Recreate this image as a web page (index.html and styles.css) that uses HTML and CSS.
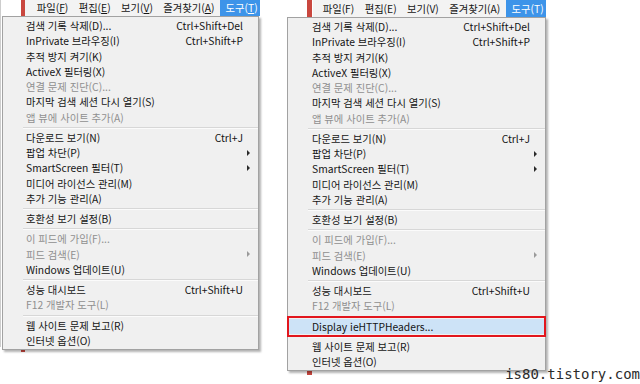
FILE: index.html
```html
<!DOCTYPE html>
<html lang="ko">
<head>
<meta charset="utf-8">
<title>IE 도구 메뉴</title>
<link rel="stylesheet" href="styles.css">
</head>
<body>
<div class="stage">
  <section class="shot shot-a">
    <div class="top">
      <div class="lead"></div>
      <nav class="bar">
        <span class="mi">파일(<u>F</u>)</span>
        <span class="mi">편집(<u>E</u>)</span>
        <span class="mi">보기(<u>V</u>)</span>
        <span class="mi">즐겨찾기(<u>A</u>)</span>
        <span class="mi on">도구(<u>T</u>)</span>
      </nav>
    </div>
    <div class="menu">
      <div class="item"><span class="label">검색 기록 삭제(D)...</span><span class="key">Ctrl+Shift+Del</span><span class="sub"></span></div>
      <div class="item"><span class="label">InPrivate 브라우징(I)</span><span class="key">Ctrl+Shift+P</span><span class="sub"></span></div>
      <div class="item"><span class="label">추적 방지 켜기(K)</span><span class="sub"></span></div>
      <div class="item"><span class="label">ActiveX 필터링(X)</span><span class="sub"></span></div>
      <div class="item dis"><span class="label">연결 문제 진단(C)...</span><span class="sub"></span></div>
      <div class="item"><span class="label">마지막 검색 세션 다시 열기(S)</span><span class="sub"></span></div>
      <div class="item dis"><span class="label">앱 뷰에 사이트 추가(A)</span><span class="sub"></span></div>
      <div class="sep"></div>
      <div class="item"><span class="label">다운로드 보기(N)</span><span class="key">Ctrl+J</span><span class="sub"></span></div>
      <div class="item"><span class="label">팝업 차단(P)</span><span class="sub arrow"></span></div>
      <div class="item"><span class="label">SmartScreen 필터(T)</span><span class="sub arrow"></span></div>
      <div class="item"><span class="label">미디어 라이선스 관리(M)</span><span class="sub"></span></div>
      <div class="item"><span class="label">추가 기능 관리(A)</span><span class="sub"></span></div>
      <div class="sep"></div>
      <div class="item"><span class="label">호환성 보기 설정(B)</span><span class="sub"></span></div>
      <div class="sep"></div>
      <div class="item dis"><span class="label">이 피드에 가입(F)...</span><span class="sub"></span></div>
      <div class="item dis"><span class="label">피드 검색(E)</span><span class="sub arrow"></span></div>
      <div class="item"><span class="label">Windows 업데이트(U)</span><span class="sub"></span></div>
      <div class="sep"></div>
      <div class="item"><span class="label">성능 대시보드</span><span class="key">Ctrl+Shift+U</span><span class="sub"></span></div>
      <div class="item dis"><span class="label">F12 개발자 도구(L)</span><span class="sub"></span></div>
      <div class="sep"></div>
      <div class="item"><span class="label">웹 사이트 문제 보고(R)</span><span class="sub"></span></div>
      <div class="item"><span class="label">인터넷 옵션(O)</span><span class="sub"></span></div>
    </div>
  </section>

  <section class="shot shot-b">
    <div class="top">
      <div class="lead"></div>
      <nav class="bar">
        <span class="mi">파일(F)</span>
        <span class="mi">편집(E)</span>
        <span class="mi">보기(V)</span>
        <span class="mi">즐겨찾기(A)</span>
        <span class="mi on">도구(T)</span>
      </nav>
    </div>
    <div class="menu">
      <div class="item"><span class="label">검색 기록 삭제(D)...</span><span class="key">Ctrl+Shift+Del</span><span class="sub"></span></div>
      <div class="item"><span class="label">InPrivate 브라우징(I)</span><span class="key">Ctrl+Shift+P</span><span class="sub"></span></div>
      <div class="item"><span class="label">추적 방지 켜기(K)</span><span class="sub"></span></div>
      <div class="item"><span class="label">ActiveX 필터링(X)</span><span class="sub"></span></div>
      <div class="item dis"><span class="label">연결 문제 진단(C)...</span><span class="sub"></span></div>
      <div class="item"><span class="label">마지막 검색 세션 다시 열기(S)</span><span class="sub"></span></div>
      <div class="item dis"><span class="label">앱 뷰에 사이트 추가(A)</span><span class="sub"></span></div>
      <div class="sep"></div>
      <div class="item"><span class="label">다운로드 보기(N)</span><span class="key">Ctrl+J</span><span class="sub"></span></div>
      <div class="item"><span class="label">팝업 차단(P)</span><span class="sub arrow"></span></div>
      <div class="item"><span class="label">SmartScreen 필터(T)</span><span class="sub arrow"></span></div>
      <div class="item"><span class="label">미디어 라이선스 관리(M)</span><span class="sub"></span></div>
      <div class="item"><span class="label">추가 기능 관리(A)</span><span class="sub"></span></div>
      <div class="sep"></div>
      <div class="item"><span class="label">호환성 보기 설정(B)</span><span class="sub"></span></div>
      <div class="sep"></div>
      <div class="item dis"><span class="label">이 피드에 가입(F)...</span><span class="sub"></span></div>
      <div class="item dis"><span class="label">피드 검색(E)</span><span class="sub arrow"></span></div>
      <div class="item"><span class="label">Windows 업데이트(U)</span><span class="sub"></span></div>
      <div class="sep"></div>
      <div class="item"><span class="label">성능 대시보드</span><span class="key">Ctrl+Shift+U</span><span class="sub"></span></div>
      <div class="item dis"><span class="label">F12 개발자 도구(L)</span><span class="sub"></span></div>
      <div class="sep"></div>
      <div class="item hl"><span class="label">Display ieHTTPHeaders...</span><span class="sub"></span></div>
      <div class="sep"></div>
      <div class="item"><span class="label">웹 사이트 문제 보고(R)</span><span class="sub"></span></div>
      <div class="item"><span class="label">인터넷 옵션(O)</span><span class="sub"></span></div>
    </div>
  </section>
</div>
<div class="mark">is80.tistory.com</div>
</body>
</html>
```

FILE: styles.css
```css
html, body {
  margin: 0;
  padding: 0;
}
body {
  width: 640px;
  height: 384px;
  overflow: hidden;
  position: relative;
  background: #ffffff;
  font-family: "Noto Sans CJK KR", "Noto Sans", sans-serif;
  font-size: 10.3px;
  color: #151515;
}

.stage {
  display: flex;
  align-items: flex-start;
}

.shot {
  flex: none;
  height: 384px;
}
.shot-a {
  width: 285px;
  background:
    linear-gradient(#c9473f, #c9473f) 21px 0 / 4px 352px no-repeat,
    linear-gradient(#cdcdcd, #cdcdcd) 0 0 / 1px 347px no-repeat;
}
.shot-b {
  width: 355px;
  background:
    linear-gradient(#c9473f, #c9473f) 22px 0 / 5px 375px no-repeat;
}

.top {
  display: flex;
  height: 16px;
}
.shot-b .top {
  height: 17px;
}
.lead {
  flex: none;
  width: 25px;
}
.shot-b .lead {
  width: 28px;
}

.bar {
  display: flex;
  flex: none;
  width: 235px;
  padding-left: 6.5px;
  box-sizing: border-box;
  background: #f3f3f3;
  overflow: hidden;
}
.shot-b .bar {
  width: 233px;
  padding-left: 4.5px;
}
.mi {
  flex: none;
  padding: 0 5.2px;
  line-height: 16px;
  white-space: nowrap;
}
.shot-b .mi {
  line-height: 17px;
}
.mi u {
  text-decoration-thickness: 1px;
  text-underline-offset: 1px;
}
.mi.on {
  background: #3d94e9;
  color: #ffffff;
  padding: 0 6px;
}

.menu {
  width: 257px;
  box-sizing: border-box;
  margin-left: 2px;
  border: 1px solid #a2a2a2;
  background: #f0f0f0;
  padding: 1px 0;
  box-shadow: 2px 2px 2px rgba(0, 0, 0, 0.3);
}
.shot-b .menu {
  width: 259px;
}

.item {
  display: flex;
  align-items: center;
  height: 15.25px;
  padding-left: 23px;
  white-space: nowrap;
}
.shot-b .item {
  padding-left: 24px;
}
.label {
  flex: 1;
}
.sub {
  flex: none;
  width: 15px;
  height: 100%;
  position: relative;
}
.sub.arrow::before {
  content: "";
  position: absolute;
  left: 4px;
  top: 50%;
  margin-top: -3px;
  border-left: 3px solid #2a2a2a;
  border-top: 3px solid transparent;
  border-bottom: 3px solid transparent;
}
.dis {
  color: #8f8f8f;
}
.dis .sub.arrow::before {
  border-left-color: #9a9a9a;
}

.sep {
  height: 1px;
  margin: 2px 0 1px 20px;
  background: #d7d7d7;
  border-bottom: 1px solid #fbfbfb;
}

.hl {
  position: relative;
  background: #cde3f7;
}
.hl::after {
  content: "";
  position: absolute;
  left: -1px;
  right: -1px;
  top: -3px;
  bottom: -3px;
  border: 2px solid #e2161d;
}

.mark {
  position: absolute;
  right: 0;
  bottom: 3px;
  font-family: "DejaVu Sans Mono", monospace;
  font-size: 14px;
  line-height: 14px;
  color: #2b2b2b;
}
```
